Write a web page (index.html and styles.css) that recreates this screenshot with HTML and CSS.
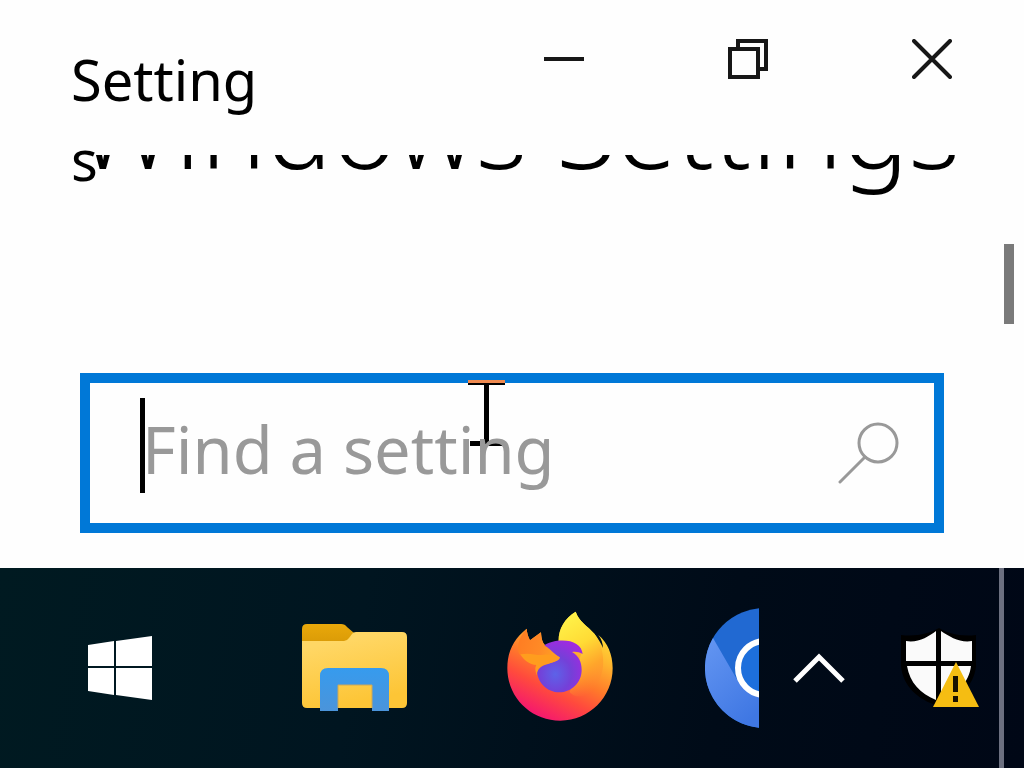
FILE: index.html
```html
<!DOCTYPE html>
<html lang="en">

	<head>
		<meta charset="UTF-8">
		<title>Settings</title>
		<link rel="stylesheet" href="styles.css">
	</head>

	<body>
		<div class="window">
			<header class="titlebar">
				<div class="title">Settings</div>
				<div class="controls">
					<button type="button" aria-label="Minimize">
						<svg width="40" height="40" viewBox="0 0 40 40"><path d="M0 20H40" /></svg>
					</button>
					<button type="button" aria-label="Restore">
						<svg width="40" height="40" viewBox="0 0 40 40"><path d="M2 10H30V38H2ZM10 10V2H38V30H30" /></svg>
					</button>
					<button type="button" aria-label="Close">
						<svg width="40" height="40" viewBox="0 0 40 40"><path d="M2 2L38 38M38 2L2 38" stroke-linecap="round" /></svg>
					</button>
				</div>
			</header>
			<main class="content">
				<div class="page">
					<h1>Windows Settings</h1>
					<form class="search">
						<svg class="pointer" width="38" height="66" viewBox="0 0 38 66">
							<path d="M0 0H37V3H0Z" fill="#ef8a50" />
							<path d="M0 3H37V5H21V61H36V66H2V61H16V5H0Z" />
						</svg>
						<span class="caret"></span>
						<input type="text" placeholder="Find a setting" aria-label="Find a setting">
						<button type="submit" aria-label="Search">
							<svg width="62" height="62" viewBox="0 0 62 62">
								<circle cx="40" cy="21" r="19" />
								<path d="M27 35L2 60" stroke-linecap="round" />
							</svg>
						</button>
					</form>
				</div>
				<div class="scrollbar"><div class="thumb"></div></div>
			</main>
		</div>
		<footer class="taskbar">
			<button type="button" class="start" aria-label="Start">
				<svg width="64" height="64" viewBox="0 0 64 64" fill="#fff">
					<path d="M0 9L26 5V30H0ZM28 5L64 0V30H28ZM0 32H26V59L0 55ZM28 32H64V64L28 59Z" />
				</svg>
			</button>
			<div class="apps">
				<button type="button" aria-label="File Explorer">
					<svg width="106" height="90" viewBox="0 0 106 90">
						<defs>
							<linearGradient id="folder" x1="0" y1="0" x2="0.3" y2="1">
								<stop offset="0.2" stop-color="#ffd765" />
								<stop offset="1" stop-color="#fdc536" />
							</linearGradient>
							<linearGradient id="tab" x1="0" y1="0" x2="0" y2="1">
								<stop offset="0" stop-color="#e9a80a" />
								<stop offset="1" stop-color="#d29405" />
							</linearGradient>
							<linearGradient id="holder" x1="0" y1="0" x2="0" y2="1">
								<stop offset="0" stop-color="#369bee" />
								<stop offset="1" stop-color="#4b94da" />
							</linearGradient>
						</defs>
						<path d="M0 30V6Q0 1 5 1H39Q43 1 45 4L52 10V30Z" fill="url(#tab)" />
						<path d="M0 18H42Q45 18 47 15L50 11Q51 9 54 9H100Q105 9 105 14V80Q105 85 100 85H5Q0 85 0 80Z" fill="url(#folder)" />
						<path d="M18 88V53Q18 45 26 45H79Q87 45 87 53V88H70V62H36V88Z" fill="url(#holder)" />
						<path d="M36 85V62H70V85" fill="none" stroke="#c9a75c" stroke-width="1" />
					</svg>
				</button>
				<button type="button" aria-label="Firefox">
					<svg width="140" height="140" viewBox="0 9 420 420">
						<defs>
							<linearGradient id="fire" x1="0.85" y1="0.1" x2="0.4" y2="1">
								<stop offset="0" stop-color="#ffe93c" />
								<stop offset="0.3" stop-color="#ffb42e" />
								<stop offset="0.55" stop-color="#ff7a2a" />
								<stop offset="0.75" stop-color="#ff4a3d" />
								<stop offset="1" stop-color="#f51a6c" />
							</linearGradient>
							<linearGradient id="flame" x1="0.3" y1="0" x2="0.6" y2="1">
								<stop offset="0" stop-color="#fff34a" />
								<stop offset="0.4" stop-color="#ffdb35" />
								<stop offset="0.7" stop-color="#ffa62b" />
								<stop offset="1" stop-color="#ff7b30" stop-opacity="0" />
							</linearGradient>
							<radialGradient id="globe" cx="0.4" cy="0.65" r="0.7">
								<stop offset="0" stop-color="#5d62e8" />
								<stop offset="0.5" stop-color="#7440d8" />
								<stop offset="1" stop-color="#a12ae0" />
							</radialGradient>
							<linearGradient id="fox" x1="0" y1="0" x2="1" y2="0.3">
								<stop offset="0" stop-color="#ff7b22" />
								<stop offset="0.6" stop-color="#ff8a26" />
								<stop offset="1" stop-color="#ffa024" />
							</linearGradient>
						</defs>
						<path d="M110 101C111 114 114 124 120 136L153 112C154 132 158 145 167 152L206 137C205 103 224 70 257 50C267 80 292 92 313 116C325 131 334 147 339 159C339 146 334 132 325 120C353 143 368 178 368 220C368 306 298 377 211 377C123 377 52 307 52 220C52 169 71 132 110 101Z" fill="url(#fire)" />
						<path d="M206 137C205 103 224 70 257 50C267 80 292 92 313 116C345 160 352 230 314 278C290 309 258 312 239 292L274 175Z" fill="url(#flame)" />
						<path d="M158 154C185 134 235 131 259 147C271 155 276 164 278 177C266 170 256 169 246 171C266 182 275 201 275 225C275 262 245 292 208 292C171 292 141 262 141 225C141 190 145 170 158 154Z" fill="url(#globe)" />
						<path d="M110 101C111 114 114 124 120 136L153 112C154 132 158 147 167 154C180 161 190 176 209 187C211 196 190 202 174 207C151 213 139 225 141 242C134 224 135 215 143 206L91 181C78 167 83 127 110 101Z" fill="url(#fox)" />
						<path d="M91 178C120 172 140 182 158 180C177 177 191 180 209 187C209 200 178 204 161 210C147 215 141 225 141 237C136 226 135 218 139 210C119 210 102 196 91 178Z" fill="#ff9d1e" />
					</svg>
				</button>
				<button type="button" aria-label="Chromium">
					<svg width="120" height="120" viewBox="0 0 120 120">
						<defs>
							<linearGradient id="light" x1="0" y1="0" x2="0.6" y2="1">
								<stop offset="0" stop-color="#6496f2" />
								<stop offset="1" stop-color="#3f77e3" />
							</linearGradient>
						</defs>
						<circle cx="60" cy="60" r="60" fill="#2169d2" />
						<path d="M8 30L34 75L60 90V120A60 60 0 0 1 8 30Z" fill="url(#light)" />
						<circle cx="60" cy="60" r="27" fill="#1d6fdc" stroke="#fff" stroke-width="6" />
					</svg>
				</button>
			</div>
			<div class="tray">
				<button type="button" aria-label="Show hidden icons">
					<svg width="52" height="30" viewBox="0 0 52 30">
						<path d="M2 28L26 4L50 28" fill="none" stroke="#fff" stroke-width="5" />
					</svg>
				</button>
				<button type="button" aria-label="Windows Security">
					<svg width="80" height="80" viewBox="0 0 80 80">
						<path d="M40 0C31 5 18 9 2 7V38C4 58 18 71 39 78C60 71 75 58 77 38V7C61 9 48 5 40 0Z" fill="#000" />
						<path d="M37 3V33H7V13C19 15 29 9 37 3ZM42 3C51 9 61 15 73 13V33H42ZM8 38H37V72C21 65 11 55 8 38ZM42 38H72C70 55 58 65 42 72Z" fill="#fafafa" />
						<path d="M57 34L80 79H34Z" fill="#f5bd12" />
						<path d="M54 48H59V64H54ZM54 68H59V74H54Z" fill="#1a1200" />
					</svg>
				</button>
			</div>
			<button type="button" class="desktop" aria-label="Show desktop"></button>
		</footer>
	</body>

</html>
```
FILE: styles.css
```css
* {
	margin: 0;
	padding: 0;
	box-sizing: border-box;
}

body {
	display: flex;
	flex-direction: column;
	height: 100vh;
	overflow: hidden;
	font-family: "Noto Sans", sans-serif;
	color: #000;
	background: #fefefe;
}

button {
	display: flex;
	align-items: center;
	justify-content: center;
	flex-shrink: 0;
	border: none;
	background: none;
}

svg {
	display: block;
	flex-shrink: 0;
}

.window {
	flex: 1;
	min-height: 0;
	display: flex;
	flex-direction: column;
}

.titlebar {
	display: flex;
	justify-content: space-between;
	height: 155px;
	padding-left: 71px;
}

.title {
	width: 200px;
	padding-top: 39px;
	font-size: 56px;
	line-height: 80px;
	word-break: break-all;
}

.controls {
	display: flex;
}

.controls button {
	width: 184px;
	height: 118px;
}

.controls svg {
	fill: none;
	stroke: #171717;
	stroke-width: 4;
}

/* the page is scrolled, so its heading is cut by the title bar */
.content {
	flex: 1;
	display: flex;
	overflow: hidden;
}

.page {
	flex: 1;
	min-width: 0;
	padding: 0 60px 0 80px;
}

h1 {
	margin: -89px 0 0 -4px;
	font-size: 110px;
	line-height: 120px;
	font-weight: 300;
	white-space: nowrap;
}

.search {
	position: relative;
	display: flex;
	height: 160px;
	margin-top: 187px;
	border: 10px solid #0078d7;
}

.search input {
	position: relative;
	flex: 1;
	min-width: 0;
	padding: 0 0 8px 52px;
	border: none;
	outline: none;
	background: transparent;
	font-family: inherit;
	font-size: 65px;
}

.search input::placeholder {
	color: #999;
	opacity: 1;
}

.search button {
	width: 130px;
}

.search button svg {
	fill: none;
	stroke: #999;
	stroke-width: 3;
}

.caret {
	position: absolute;
	top: 15px;
	left: 50px;
	width: 5px;
	height: 95px;
	background: #000;
}

.pointer {
	position: absolute;
	top: -3px;
	left: 378px;
}

.scrollbar {
	width: 20px;
	padding-top: 89px;
}

.thumb {
	width: 10px;
	height: 80px;
	background: #7a7a7a;
}

.taskbar {
	display: flex;
	height: 200px;
	background: linear-gradient(100deg, #001a21, #001520 35%, #000b18 70%, #000716);
}

.start {
	width: 240px;
}

.apps {
	flex: 1;
	display: flex;
	padding-left: 12px;
	overflow: hidden;
}

.apps button {
	width: 205px;
}

.tray {
	display: flex;
}

.tray button {
	width: 120px;
}

.desktop {
	width: 25px;
	border-left: 5px solid #6c7080;
}
```
